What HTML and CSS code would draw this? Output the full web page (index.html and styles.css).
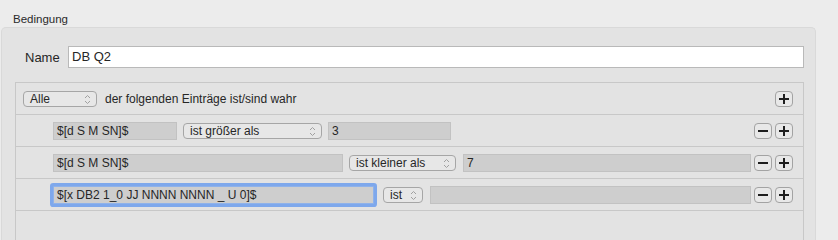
FILE: index.html
```html
<!DOCTYPE html>
<html lang="de">
<head>
    <meta charset="UTF-8">
    <title>Bedingung</title>
    <link rel="stylesheet" href="styles.css">
</head>
<body>
    <div class="legend">Bedingung</div>

    <div class="box">
        <div class="name-row">
            <span class="name-label">Name</span>
            <div class="name-input">DB Q2</div>
        </div>

        <div class="rules">
            <div class="rule head">
                <div class="popup w-alle">Alle
                    <svg class="chev" viewBox="0 0 7 11"><path d="M1 4 L3.5 1.5 L6 4 M1 7 L3.5 9.5 L6 7"/></svg>
                </div>
                <span class="rule-text">der folgenden Einträge ist/sind wahr</span>
                <div class="btns">
                    <div class="sq-btn plus"></div>
                </div>
            </div>

            <div class="rule">
                <div class="field w-124">$[d S M SN]$</div>
                <div class="popup w-139">ist größer als
                    <svg class="chev" viewBox="0 0 7 11"><path d="M1 4 L3.5 1.5 L6 4 M1 7 L3.5 9.5 L6 7"/></svg>
                </div>
                <div class="field w-123">3</div>
                <div class="btns">
                    <div class="sq-btn minus"></div>
                    <div class="sq-btn plus"></div>
                </div>
            </div>

            <div class="rule">
                <div class="field w-290">$[d S M SN]$</div>
                <div class="popup w-107">ist kleiner als
                    <svg class="chev" viewBox="0 0 7 11"><path d="M1 4 L3.5 1.5 L6 4 M1 7 L3.5 9.5 L6 7"/></svg>
                </div>
                <div class="field grow">7</div>
                <div class="btns">
                    <div class="sq-btn minus"></div>
                    <div class="sq-btn plus"></div>
                </div>
            </div>

            <div class="rule">
                <div class="field focused w-321">$[x DB2 1_0 JJ NNNN NNNN _ U 0]$</div>
                <div class="popup w-40">ist
                    <svg class="chev" viewBox="0 0 7 11"><path d="M1 4 L3.5 1.5 L6 4 M1 7 L3.5 9.5 L6 7"/></svg>
                </div>
                <div class="field grow"></div>
                <div class="btns">
                    <div class="sq-btn minus"></div>
                    <div class="sq-btn plus"></div>
                </div>
            </div>

            <div class="rules-empty"></div>
        </div>
    </div>
</body>
</html>
```

FILE: styles.css
```css
body {
    margin: 0;
    height: 240px;
    overflow: hidden;
    background: #ececec;
    font-family: "Liberation Sans", Arial, sans-serif;
    color: #262626;
}

.legend {
    padding: 12px 0 0 13px;
    height: 15px;
    line-height: 15px;
    font-size: 11.5px;
    color: #2a2a2a;
}

.box {
    margin-left: 1px;
    width: 815px;
    height: 213px;
    box-sizing: border-box;
    overflow: hidden;
    background: #e3e3e3;
    border: 1px solid #d9d9d9;
    border-bottom: none;
    border-radius: 5px 5px 0 0;
    padding: 18px 11px 0 13px;
}

.name-row {
    display: flex;
    align-items: center;
    height: 22px;
}

.name-label {
    font-size: 13px;
    margin-left: 10px;
    width: 43px;
}

.name-input {
    flex: 1;
    height: 22px;
    box-sizing: border-box;
    background: #fff;
    border: 1px solid #b9b9b9;
    padding-left: 3px;
    font-size: 13px;
    line-height: 20px;
}

.rules {
    margin-top: 14px;
    border: 1px solid #c8c8c8;
    border-bottom: none;
}

.rule {
    display: flex;
    align-items: center;
    height: 31px;
    border-bottom: 1px solid #c8c8c8;
    padding: 0 10px 0 37px;
    font-size: 12px;
}

.rule.head {
    padding-left: 7px;
}

.rule-text {
    margin-left: 8px;
}

.rules-empty {
    height: 29px;
}

.field {
    height: 18px;
    box-sizing: border-box;
    background: #cecece;
    border: 1px solid #c2c2c2;
    padding-left: 3px;
    line-height: 16px;
    margin-right: 6px;
    white-space: nowrap;
    overflow: hidden;
}

.field.grow {
    flex: 1;
    margin-right: 3px;
}

.field.focused {
    border-color: #8fb2ea;
    border-radius: 1px;
    box-shadow: 0 0 0 3px #7ea8ec;
    margin-right: 9px;
}

.popup {
    position: relative;
    height: 16px;
    box-sizing: border-box;
    border: 1px solid #a6a6a6;
    border-radius: 4px;
    background: #e7e7e7;
    padding-left: 6px;
    line-height: 14px;
    margin-right: 6px;
    white-space: nowrap;
}

.rule.head .popup {
    margin-right: 0;
}

.chev {
    position: absolute;
    right: 5px;
    top: 2px;
    width: 7px;
    height: 11px;
    fill: none;
    stroke: #a0a0a0;
    stroke-width: 1;
}

.w-alle { width: 74px; }
.w-124 { width: 124px; }
.w-139 { width: 139px; }
.w-123 { width: 123px; }
.w-290 { width: 290px; }
.w-107 { width: 107px; margin-right: 7px; }
.w-321 { width: 321px; }
.w-40 { width: 40px; margin-right: 7px; }

.btns {
    display: flex;
    gap: 3px;
    margin-left: auto;
}

.sq-btn {
    position: relative;
    width: 18px;
    height: 16px;
    box-sizing: border-box;
    border: 1px solid #a3a3a3;
    border-radius: 4px;
    background: #e8e8e8;
}

.sq-btn::before,
.plus::after {
    content: "";
    position: absolute;
    left: 3px;
    top: 6px;
    width: 10px;
    height: 2px;
    background: #1e1e1e;
}

.plus::after {
    left: 7px;
    top: 2px;
    width: 2px;
    height: 10px;
}
```
